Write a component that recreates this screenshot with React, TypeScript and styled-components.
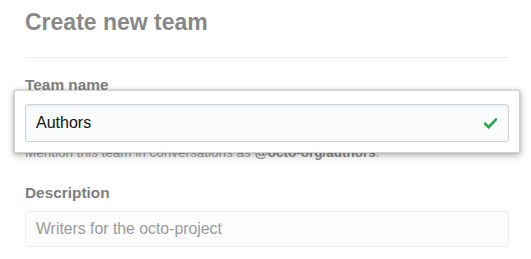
import React from "react";
import styled, { createGlobalStyle } from "styled-components";

const Global = createGlobalStyle`
  html, body { margin: 0; padding: 0; background: #ffffff; }
  body { font-family: "Liberation Sans", Arial, Helvetica, sans-serif; }
`;

const Page = styled.div`
  width: 531px;
  height: 259px;
  overflow: hidden;
  padding: 7px 22px 0 25px;
  box-sizing: border-box;
`;

const Header = styled.div`
  padding-bottom: 20px;
  border-bottom: 1px solid #ececec;
`;

const Title = styled.h1`
  margin: 0;
  font-size: 23px;
  line-height: 30px;
  font-weight: 700;
  color: #888888;
`;

const Field = styled.div<{ $top: number }>`
  margin-top: ${(p) => p.$top}px;
`;

const Label = styled.label<{ $gap: number }>`
  display: block;
  font-size: 15.4px;
  line-height: 20px;
  font-weight: 700;
  color: #7e7e7e;
  margin-bottom: ${(p) => p.$gap}px;
`;

const InputSlot = styled.div`
  position: relative;
`;

const Spotlight = styled.div`
  position: absolute;
  left: -11px;
  right: -11px;
  top: -14px;
  bottom: -11px;
  background: #ffffff;
  border: 1px solid #d2d2d2;
  box-shadow: 0 2px 7px rgba(0, 0, 0, 0.33), 0 0 2px rgba(0, 0, 0, 0.18);
`;

const Input = styled.div<{ $active?: boolean; $height: number }>`
  position: relative;
  box-sizing: border-box;
  height: ${(p) => p.$height}px;
  display: flex;
  align-items: center;
  justify-content: space-between;
  padding: 0 11px 0 10px;
  border-radius: 3px;
  background: ${(p) => (p.$active ? "#fafbfc" : "#fcfcfc")};
  border: 1px solid ${(p) => (p.$active ? "#d1d5da" : "#ececec")};
  box-shadow: ${(p) => (p.$active ? "inset 0 1px 2px rgba(27,31,35,0.075)" : "none")};
  color: ${(p) => (p.$active ? "#111111" : "#9a9a9a")};
`;

const InputText = styled.span<{ $size: number }>`
  font-size: ${(p) => p.$size}px;
`;

const Check = styled.svg`
  width: 13px;
  height: 11px;
  margin-top: 1px;
`;

const Note = styled.p`
  margin: 2px 0 0;
  font-size: 13.5px;
  line-height: 18px;
  color: #9e9e9e;
`;

const Strong = styled.strong`
  color: #8a8a8a;
`;

export default function App() {
  return (
    <>
      <Global />
      <Page>
        <Header>
          <Title>Create new team</Title>
        </Header>
        <Field $top={17}>
          <Label $gap={9}>Team name</Label>
          <InputSlot>
            <Spotlight />
            <Input $active $height={38}>
              <InputText $size={16}>Authors</InputText>
              <Check viewBox="0 0 12 10">
                <path d="M1 5.2 L4.3 8.4 L11 1.4" fill="none" stroke="#28a745" strokeWidth="2.4" strokeLinecap="square" />
              </Check>
            </Input>
          </InputSlot>
          <Note>
            Mention this team in conversations as <Strong>@octo-org/authors</Strong>.
          </Note>
        </Field>
        <Field $top={21}>
          <Label $gap={8}>Description</Label>
          <Input $height={36}>
            <InputText $size={15.8}>Writers for the octo-project</InputText>
          </Input>
        </Field>
      </Page>
    </>
  );
}
